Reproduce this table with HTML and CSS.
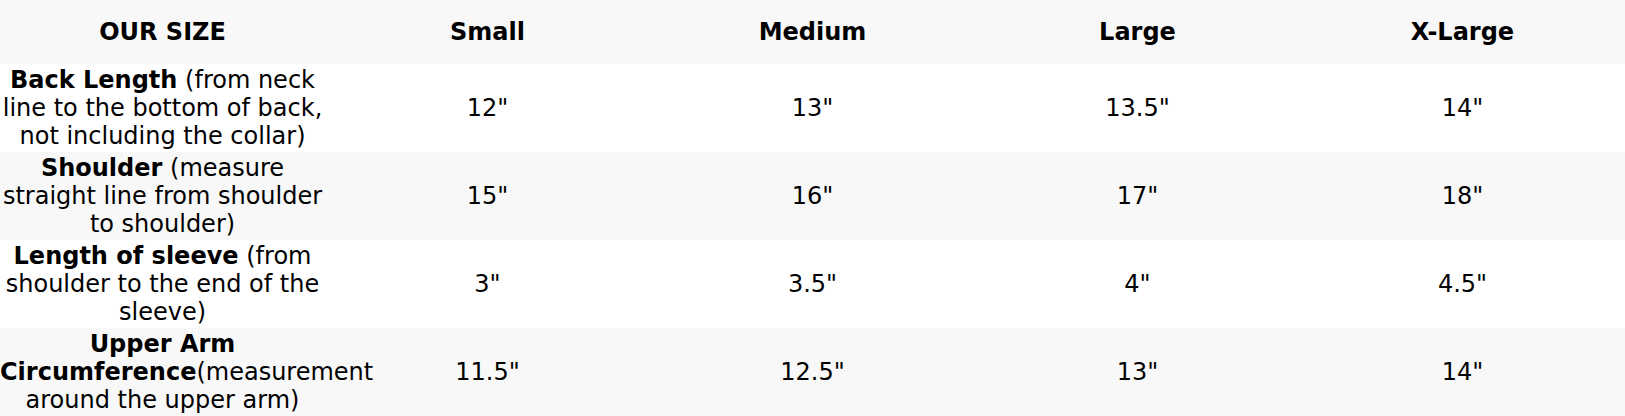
FILE: index.html
```html
<!DOCTYPE html>
<html>
<head>
<meta charset="utf-8">
<link rel="stylesheet" href="styles.css">
</head>
<body>
<table class="size-table">
  <thead>
    <tr class="row-alt">
      <th>OUR SIZE</th>
      <th>Small</th>
      <th>Medium</th>
      <th>Large</th>
      <th>X-Large</th>
    </tr>
  </thead>
  <tbody>
    <tr>
      <td><strong>Back Length</strong> (from neck line to the bottom of back, not including the collar)</td>
      <td>12"</td>
      <td>13"</td>
      <td>13.5"</td>
      <td>14"</td>
    </tr>
    <tr class="row-alt">
      <td><strong>Shoulder</strong> (measure straight line from shoulder to shoulder)</td>
      <td>15"</td>
      <td>16"</td>
      <td>17"</td>
      <td>18"</td>
    </tr>
    <tr>
      <td><strong>Length of sleeve</strong> (from shoulder to the end of the sleeve)</td>
      <td>3"</td>
      <td>3.5"</td>
      <td>4"</td>
      <td>4.5"</td>
    </tr>
    <tr class="row-alt">
      <td><strong>Upper Arm Circumference</strong>(measurement around the upper arm)</td>
      <td>11.5"</td>
      <td>12.5"</td>
      <td>13"</td>
      <td>14"</td>
    </tr>
  </tbody>
</table>
</body>
</html>
```

FILE: styles.css
```css
html, body {
  margin: 0;
  padding: 0;
  background: #ffffff;
}

body {
  font-family: "DejaVu Sans", sans-serif;
  font-size: 24px;
  color: #000000;
}

.size-table {
  width: 100%;
  table-layout: fixed;
  border-collapse: collapse;
  border-spacing: 0;
}

.size-table th,
.size-table td {
  text-align: center;
  vertical-align: middle;
  padding: 2px 0;
  line-height: 28px;
}

.size-table th {
  font-weight: bold;
  padding: 18px 0;
}

.size-table strong {
  font-weight: bold;
}

.row-alt {
  background: #f8f8f8;
}
```
